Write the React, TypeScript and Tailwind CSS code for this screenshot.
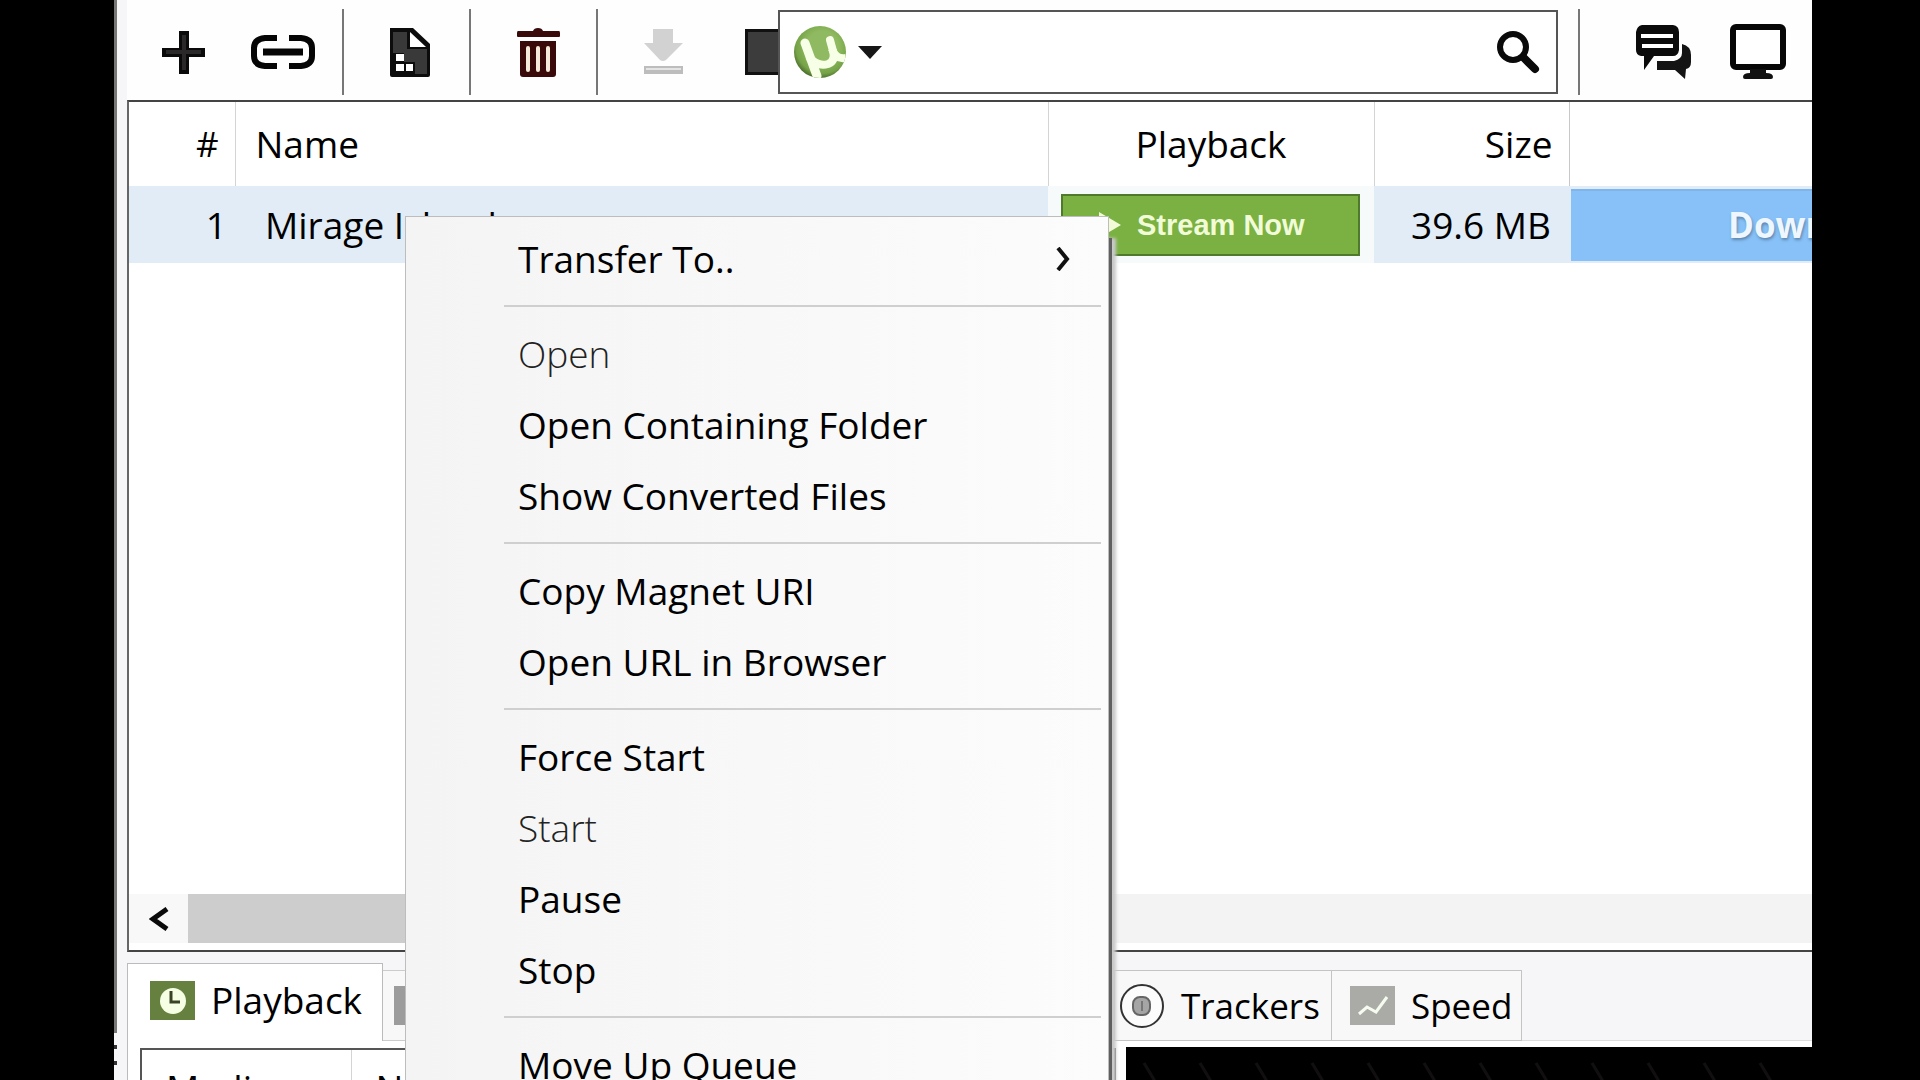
import React from "react";

interface MenuEntry {
  label: string;
  disabled?: boolean;
  submenu?: boolean;
}

const menuGroups: MenuEntry[][] = [
  [{ label: "Transfer To..", submenu: true }],
  [
    { label: "Open", disabled: true },
    { label: "Open Containing Folder" },
    { label: "Show Converted Files" },
  ],
  [{ label: "Copy Magnet URI" }, { label: "Open URL in Browser" }],
  [
    { label: "Force Start" },
    { label: "Start", disabled: true },
    { label: "Pause" },
    { label: "Stop" },
  ],
  [{ label: "Move Up Queue" }],
];

function Divider() {
  return <div className="h-[86px] w-[2px] shrink-0 bg-[#777]" />;
}

function LogoIcon() {
  return (
    <svg width="52" height="52" viewBox="0 0 52 52" fill="none">
      <defs>
        <radialGradient id="logo" cx="0.55" cy="0.4" r="0.6">
          <stop offset="0.5" stopColor="#8fba61" />
          <stop offset="0.85" stopColor="#76a347" />
          <stop offset="1" stopColor="#4f7330" />
        </radialGradient>
        <clipPath id="disc">
          <circle cx="26" cy="26" r="26" />
        </clipPath>
      </defs>
      <circle cx="26" cy="26" r="26" fill="url(#logo)" />
      <g stroke="#f7ffe6" clipPath="url(#disc)">
        <path d="M11 17L23 50" strokeWidth="9" strokeLinecap="round" />
        <path
          d="M16 32Q24 41 34 38Q42 35 39 25L36 14"
          strokeWidth="8"
          strokeLinecap="round"
        />
        <path d="M38 23Q42 34 52 32" strokeWidth="8" />
      </g>
    </svg>
  );
}

function Toolbar() {
  return (
    <header className="flex h-[100px] shrink-0 items-center bg-[#fefefe] pt-1 pr-[26px] pl-[35px]">
      <button aria-label="Add torrent">
        <svg width="43" height="43" viewBox="0 0 43 43">
          <path d="M17 0h10v17h16v9H27v17H17V26H0v-9h17z" fill="#0a0a0a" />
          <path d="M20 4h4v15h15v4H24v16h-4V23H4v-4h16z" fill="#2a2829" />
        </svg>
      </button>
      <button aria-label="Add torrent from URL" className="ml-[45px]">
        <svg width="66" height="34" viewBox="0 0 66 34" fill="none">
          <path
            d="M27 3H15Q4 4 4 13V21Q4 30 15 31H27M39 3H51Q62 4 62 13V21Q62 30 51 31H39"
            stroke="#050505"
            strokeWidth="6"
          />
          <path d="M13 17H53" stroke="#050505" strokeWidth="7" />
        </svg>
      </button>
      <div className="w-[26px]" />
      <Divider />
      <button aria-label="Create new torrent" className="mr-[39px] ml-[46px]">
        <svg width="40" height="49" viewBox="0 0 40 49">
          <path d="M0 0H23L40 16V47Q40 49 38 49H2Q0 49 0 47Z" fill="#0c0c0c" />
          <path d="M3 4H17V21H37V46H25V34H14V25H3Z" fill="#3a393a" />
          <path d="M20 4V19H36Z" fill="#fff" />
          <path d="M6 26h8v7H6zM6 36h8v7H6zM16 36h7v7h-7z" fill="#fff" />
        </svg>
      </button>
      <Divider />
      <button aria-label="Remove torrent" className="mr-9 ml-[46px]">
        <svg width="43" height="49" viewBox="0 0 43 49">
          <path
            d="M16 3Q17 0 21 0Q25 0 26 3H42Q43 3 43 5V8Q43 9 42 9H1Q0 9 0 8V5Q0 3 1 3Z"
            fill="#3a0a0b"
          />
          <path d="M3 13H39V46Q39 49 36 49H6Q3 49 3 46Z" fill="#3a0a0b" />
          <g stroke="#f5ecdc" strokeWidth="4" strokeLinecap="round">
            <path d="M11 20V42M21 20V42M31 20V42" />
          </g>
        </svg>
      </button>
      <Divider />
      <button aria-label="Start download" className="ml-[46px]" disabled>
        <svg width="39" height="46" viewBox="0 0 39 46">
          <path d="M9 0H29V14H39L22 31Q19 33 16 31L0 14H9Z" fill="#d2d2d2" />
          <path d="M0 37H39V45H0Z" fill="#bdbdbd" />
          <path d="M2 40H37" stroke="#e4e4e4" strokeWidth="2" />
        </svg>
      </button>
      <button
        aria-label="Stop"
        className="ml-[62px] h-[46px] w-[33px] border-3 border-r-0 border-[#111] bg-[#3d3c3d]"
      />
      <div className="flex h-[84px] min-w-0 flex-1 items-center border-2 border-[#555] bg-white pr-4 pl-[14px]">
        <button aria-label="Choose search provider" className="flex items-center gap-3">
          <LogoIcon />
          <svg width="24" height="13" viewBox="0 0 24 13">
            <path d="M0 0H24L12 13Z" fill="#161616" />
          </svg>
        </button>
        <input
          type="text"
          aria-label="Search"
          className="h-full min-w-0 flex-1 bg-transparent px-4 text-[35px] outline-none"
        />
        <button aria-label="Run search">
          <svg width="43" height="43" viewBox="0 0 43 43" fill="none" stroke="#0a0a0a">
            <circle cx="16" cy="16" r="13" strokeWidth="6" />
            <path d="M27 27L38 38" strokeWidth="8" strokeLinecap="round" />
          </svg>
        </button>
      </div>
      <div className="w-5" />
      <Divider />
      <button aria-label="Chat" className="ml-14">
        <svg width="56" height="54" viewBox="0 0 56 54">
          <path
            d="M6 0H37Q43 1 43 7V25Q42 31 37 31H18L8 45V31H5Q0 30 0 25V7Q1 1 6 0Z"
            fill="#0b0b0b"
          />
          <path d="M5 11H37M6 21H37" stroke="#fff" strokeWidth="4" />
          <path
            d="M46 19Q55 21 55 30V37Q55 43 50 44L49 54L39 45H21V36H38Q46 34 46 28Z"
            fill="#141414"
          />
        </svg>
      </button>
      <button aria-label="Remote" className="ml-[38px]">
        <svg width="56" height="56" viewBox="0 0 56 56">
          <rect x="3" y="3" width="50" height="40" rx="3" fill="#fff" stroke="#060606" strokeWidth="6" />
          <path d="M20 45H36V49Q43 49 43 53Q43 55 41 55H15Q13 55 13 53Q13 49 20 49Z" fill="#111" />
        </svg>
      </button>
    </header>
  );
}

function TorrentTable() {
  return (
    <table className="w-full table-fixed border-collapse text-[37px] leading-[50px] text-black">
      <colgroup>
        <col className="w-[106px]" />
        <col />
        <col className="w-[326px]" />
        <col className="w-[195px]" />
        <col className="w-[243px]" />
      </colgroup>
      <thead>
        <tr className="h-[84px]">
          <th className="border-r border-[#d4d4d4] pr-4 text-right text-[35px] font-normal">#</th>
          <th className="border-r border-[#d4d4d4] pl-5 text-left font-normal">Name</th>
          <th className="border-r border-[#d4d4d4] text-center font-normal">Playback</th>
          <th className="border-r border-[#c8c8c8] pr-4 text-right font-normal">Size</th>
          <th aria-label="Status" />
        </tr>
      </thead>
      <tbody>
        <tr className="h-[77px] bg-[#e1ecf7]">
          <td className="pr-2 text-right">1</td>
          <td className="truncate pl-[30px]">Mirage Island</td>
          <td className="bg-[#f6fafa] pr-[14px] pl-[13px]">
            <button className="flex h-[62px] w-full items-center gap-4 border-2 border-[#4f7a2c] bg-[#7ab142] pl-9 font-['Liberation_Sans',sans-serif] text-[29px] font-bold text-[#f1fbd8]">
              <svg width="22" height="26" viewBox="0 0 22 26">
                <path d="M0 0L22 13L0 26Z" fill="#f1fbd8" />
              </svg>
              Stream Now
            </button>
          </td>
          <td className="pr-[18px] text-right whitespace-nowrap">39.6 MB</td>
          <td className="pl-[2px]">
            <div className="h-[72px] overflow-hidden border-t-2 border-[#7fb5e8] bg-[#87c1f8] pl-[157px] text-[35px] leading-[68px] font-bold text-[#eef7ff] [text-shadow:1px_2px_3px_#5f86ad]">
              Downloading
            </div>
          </td>
        </tr>
      </tbody>
    </table>
  );
}

function Scrollbar() {
  return (
    <div className="mb-[7px] flex h-[49px] bg-[#f3f3f3]">
      <button aria-label="Scroll left" className="flex w-[59px] items-center justify-center bg-[#f8f8f8]">
        <svg width="20" height="24" viewBox="0 0 20 24" fill="none">
          <path d="M18 2L4 12L18 22" stroke="#0a0a0a" strokeWidth="5" />
        </svg>
      </button>
      <div className="w-[50%] bg-[#cdcdcd]" />
    </div>
  );
}

function DetailTabs() {
  return (
    <nav className="flex h-[89px] shrink-0 items-end leading-[50px]">
      <button className="flex h-[78px] w-[256px] items-center gap-4 border border-b-0 border-[#bbb] bg-white pb-[5px] pl-[22px] text-[37px]">
        <svg width="45" height="39" viewBox="0 0 45 39">
          <rect width="45" height="39" fill="#65803f" />
          <circle cx="23" cy="20" r="13" fill="#f6ffe4" />
          <path d="M21 10V21H30" stroke="#3a4424" strokeWidth="3" fill="none" />
        </svg>
        Playback
      </button>
      <button
        aria-label="Files"
        className="flex h-[71px] flex-1 items-center border border-l-0 border-[#ccc] bg-[#f8f8f8] pl-[11px]"
      >
        <span className="h-[39px] w-[42px] bg-[#9c9c9c]" />
      </button>
      <button className="flex h-[71px] w-[217px] items-center gap-4 border border-l-0 border-[#c4c4c4] bg-[#f8f8f8] pl-1 text-[35px]">
        <svg className="shrink-0" width="46" height="46" viewBox="0 0 46 46">
          <circle cx="23" cy="23" r="21" fill="#fcfcfc" stroke="#333" strokeWidth="2" />
          <rect x="14" y="14" width="17" height="18" rx="7" fill="#a5a5a5" stroke="#666" strokeWidth="2" />
          <path d="M23 18V28" stroke="#777" strokeWidth="2" />
        </svg>
        Trackers
      </button>
      <button className="flex h-[71px] w-[190px] items-center gap-4 border border-l-0 border-[#c4c4c4] bg-[#f8f8f8] pl-[18px] text-[35px]">
        <svg className="shrink-0" width="45" height="39" viewBox="0 0 45 39">
          <rect width="45" height="39" fill="#aaaba7" />
          <path d="M9 28L17 21L26 26L37 11" stroke="#f6fbf0" strokeWidth="3" fill="none" />
        </svg>
        Speed
      </button>
      <div className="w-[290px] self-stretch border-b border-[#ddd]" />
    </nav>
  );
}

function DetailPane() {
  return (
    <div className="flex min-h-0 flex-1 overflow-hidden border-l border-[#bbb] bg-white pt-[6px] pl-3">
      <table className="mt-[1px] h-[80px] flex-1 border-2 border-[#555] text-[37px] leading-[50px]">
        <thead>
          <tr>
            <th className="w-[210px] border-r border-[#d4d4d4] pl-6 text-left font-normal">
              Media
            </th>
            <th className="pl-6 text-left font-normal">Name</th>
          </tr>
        </thead>
      </table>
      <svg className="ml-[10px] h-[84px] w-[686px] shrink-0 bg-black">
        <defs>
          <pattern id="weave" width="56" height="40" patternUnits="userSpaceOnUse">
            <path d="M18 16L30 36" stroke="#110f10" strokeWidth="3" />
          </pattern>
        </defs>
        <rect width="100%" height="100%" fill="url(#weave)" />
      </svg>
    </div>
  );
}

function ContextMenu() {
  return (
    <div
      role="menu"
      className="absolute top-[216px] left-[291px] w-[704px] border border-[#bdbdbd] bg-linear-to-r from-[#f4f4f4] to-[#fbfcfb] pt-[6px] shadow-[3px_22px_0_#606060,7px_22px_3px_#c9c9c9]"
    >
      {menuGroups.map((group, index) => (
        <div key={index} role="group">
          {index > 0 && (
            <div className="flex h-6 items-center pr-[7px] pl-[98px]">
              <div className="h-[2px] w-full bg-[#cfcfcf]" />
            </div>
          )}
          {group.map((item) => (
            <button
              key={item.label}
              role="menuitem"
              disabled={item.disabled}
              className="flex h-[71px] w-full items-center justify-between pr-[38px] pl-28 text-[37px] leading-[50px] text-black disabled:font-light disabled:text-[#222]"
            >
              {item.label}
              {item.submenu && (
                <svg width="14" height="24" viewBox="0 0 14 24" fill="none">
                  <path d="M2 1L11 12L2 23" stroke="#111" strokeWidth="4" />
                </svg>
              )}
            </button>
          ))}
        </div>
      ))}
    </div>
  );
}

export default function App() {
  return (
    <div className="h-screen overflow-hidden bg-black pr-[108px] pl-[114px] font-['Open_Sans','Noto_Sans',sans-serif] text-black">
      <div className="relative flex h-full bg-[#f6f6f8]">
        {/* Edge of the sidebar */}
        <div className="flex w-[3px] shrink-0 flex-col gap-3 bg-[#f6f6f8]">
          <div className="h-[1033px] shrink-0 bg-[#777]" />
          <div className="h-1 shrink-0 bg-[#333]" />
          <div className="h-1 shrink-0 bg-[#333]" />
        </div>
        <div className="ml-[10px] flex min-w-0 flex-1 flex-col">
          <Toolbar />
          <main className="flex min-h-0 flex-1 flex-col border-y-2 border-l-2 border-y-[#444] border-l-[#666] bg-white">
            <TorrentTable />
            <div className="flex-1" />
            <Scrollbar />
          </main>
          <section className="flex h-32 shrink-0 flex-col overflow-hidden">
            <DetailTabs />
            <DetailPane />
          </section>
        </div>
        <ContextMenu />
      </div>
    </div>
  );
}
